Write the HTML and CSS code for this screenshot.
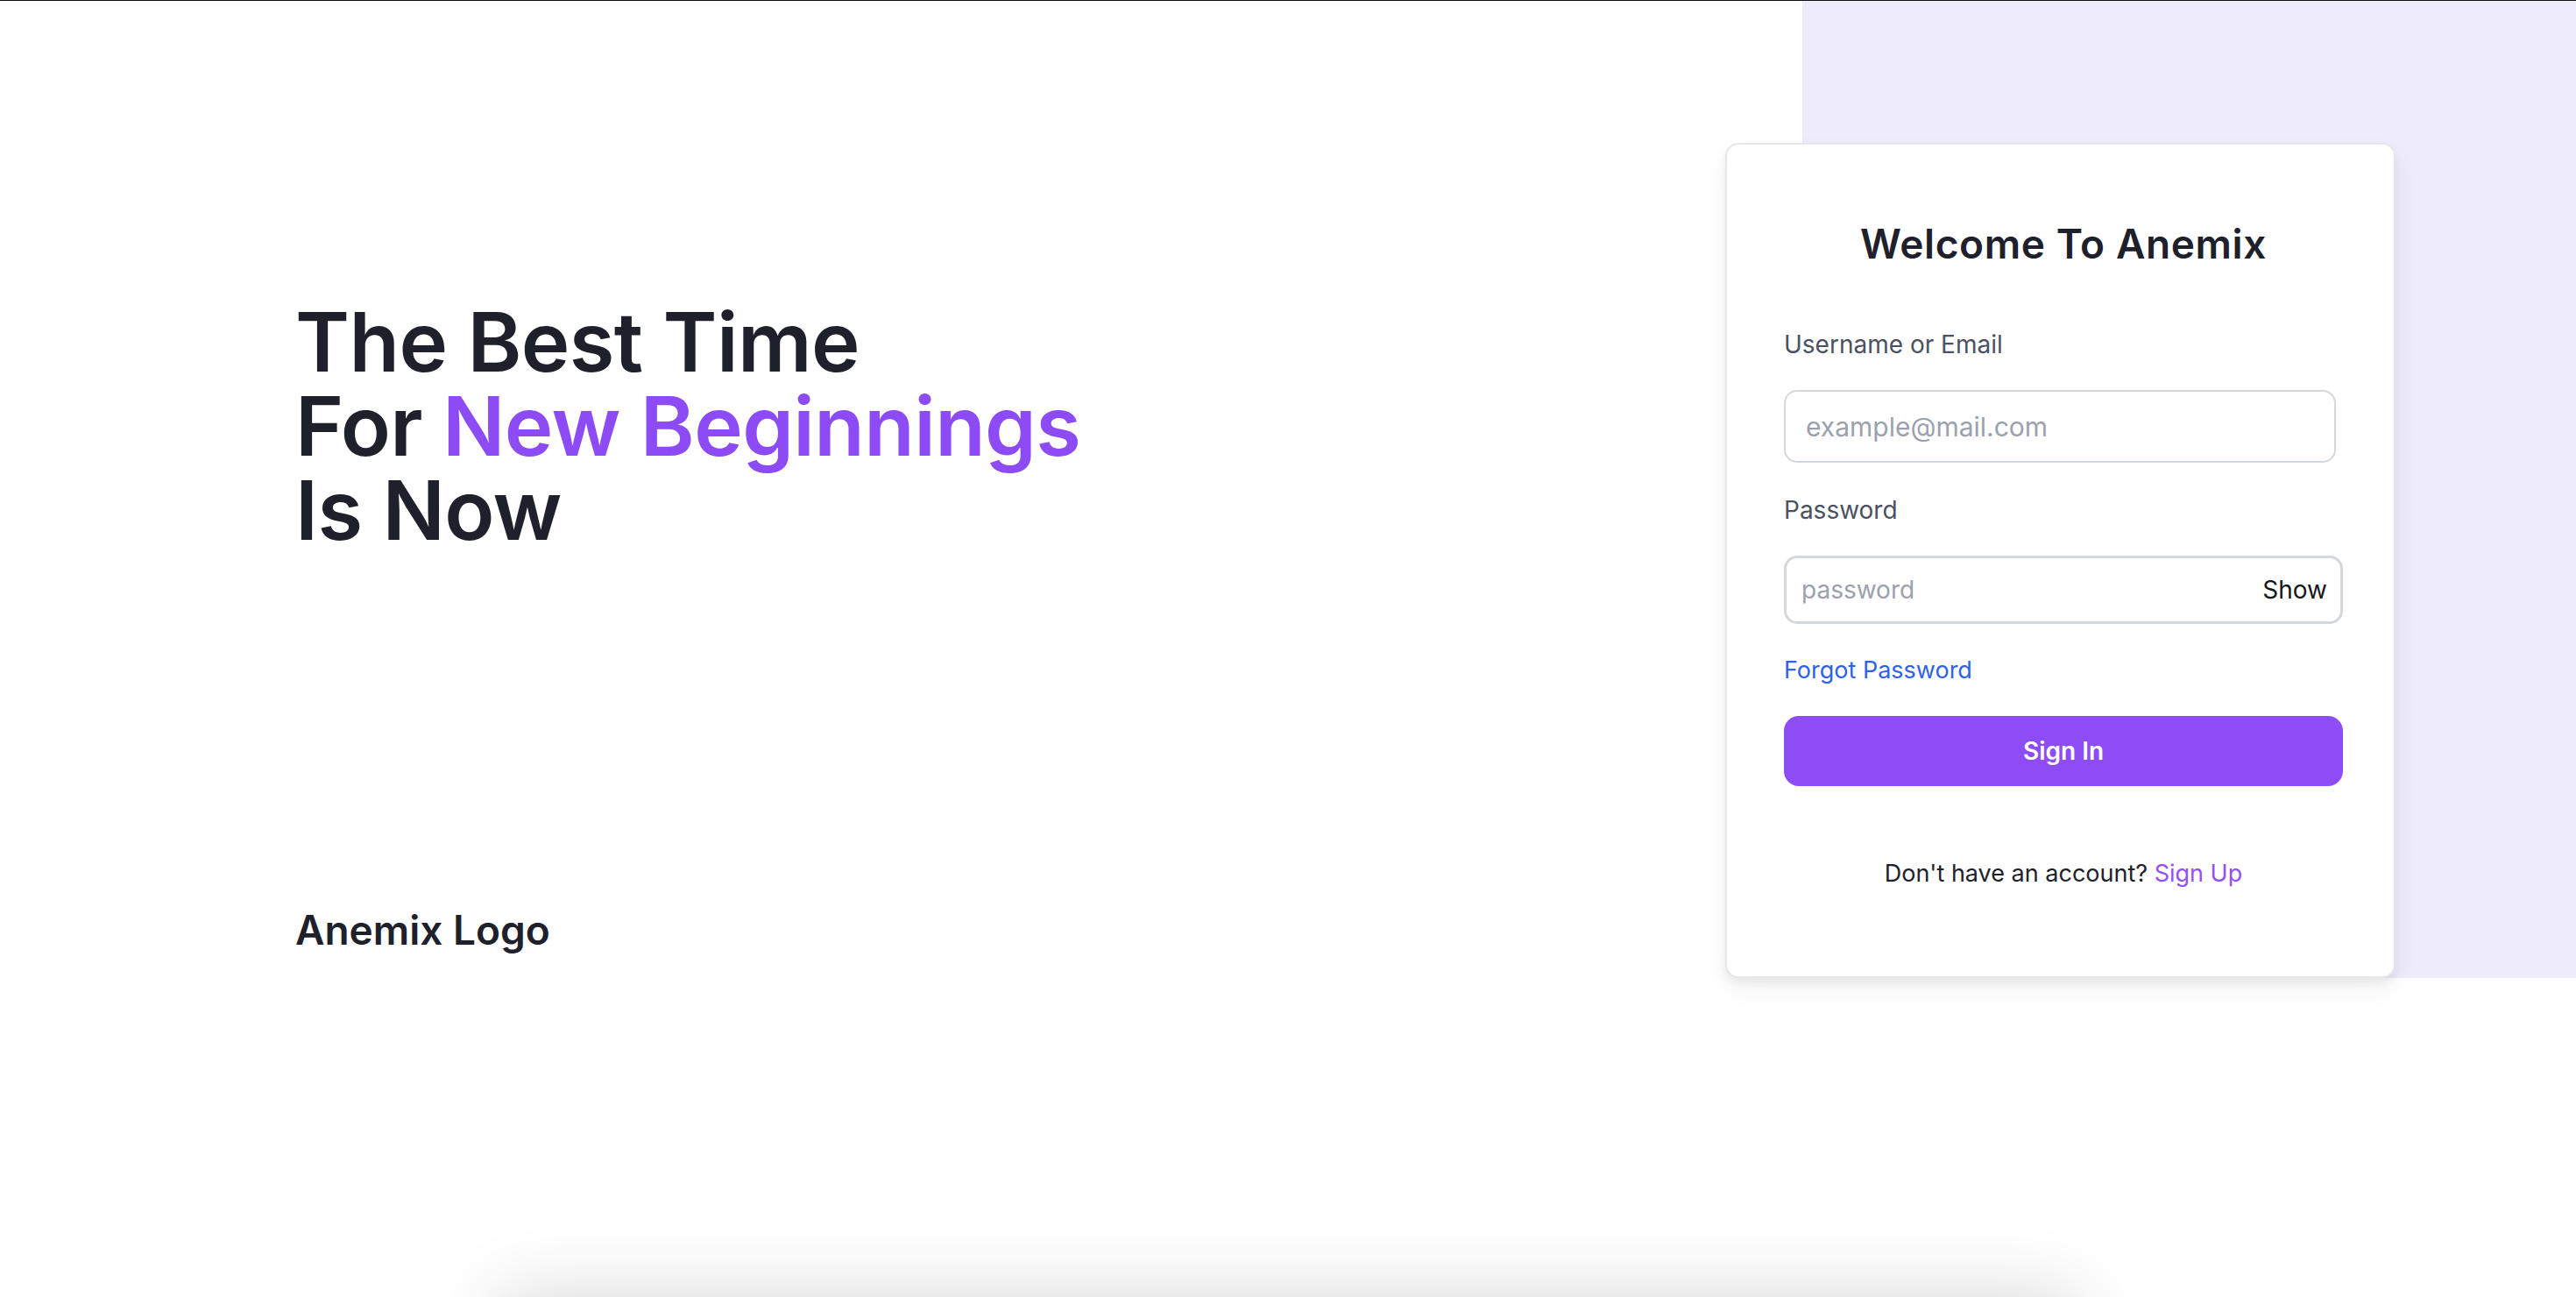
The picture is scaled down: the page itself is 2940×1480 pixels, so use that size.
FILE: index.html
```html
<!DOCTYPE html>
<html lang="en">
<head>
<meta charset="utf-8">
<title>Anemix - Sign In</title>
<link rel="stylesheet" href="styles.css">
</head>
<body>
<main class="hero">
  <section class="intro">
    <h1 class="headline"><span class="line">The Best Time</span><span class="line">For <span class="accent">New Beginnings</span></span><span class="line">Is Now</span></h1>
    <div class="logo">Anemix Logo</div>
  </section>
  <section class="card">
    <h2 class="card-title">Welcome To Anemix</h2>
    <form class="form">
      <label class="label" for="email">Username or Email</label>
      <input class="input input-email" id="email" type="text" placeholder="example@mail.com">
      <label class="label label-pass" for="pass">Password</label>
      <div class="pass-field">
        <input class="input-pass" id="pass" type="password" placeholder="password">
        <button type="button" class="show">Show</button>
      </div>
      <a class="forgot" href="#">Forgot Password</a>
      <button type="button" class="signin">Sign In</button>
      <p class="signup">Don't have an account? <a href="#">Sign Up</a></p>
    </form>
  </section>
</main>
<section class="below"></section>
</body>
</html>
```

FILE: styles.css
```css
* { box-sizing: border-box; }
html, body { margin: 0; padding: 0; }
body {
  font-family: Inter, "Noto Sans", sans-serif;
  color: #1e212b;
  background: #fff;
  border-top: 1px solid #111;
  overflow-x: hidden;
}
.hero {
  display: grid;
  grid-template-columns: 1fr 765px;
  height: 1115px;
  padding: 0 206px 0 337px;
  background: linear-gradient(90deg, #ffffff 0, #ffffff 2057px, #eeebfc 2057px);
}
.intro {
  display: flex;
  flex-direction: column;
  padding-top: 341px;
}
.headline {
  margin: 0;
  display: flex;
  flex-direction: column;
  font-size: 94px;
  font-weight: 600;
  letter-spacing: -0.6px;
  color: #1e212b;
}
.line {
  display: block;
  height: 96px;
  line-height: 96px;
}
.accent { color: #8c4bf5; }
.logo {
  margin-top: 404px;
  font-size: 46px;
  line-height: 1.2;
  font-weight: 600;
  color: #1e212b;
}
.card {
  align-self: end;
  margin-top: 162px;
  height: 953px;
  background: #fff;
  border: 2px solid #e6e7ea;
  border-radius: 15px;
  box-shadow: 0 6px 10px rgba(0,0,0,0.06), 0 14px 30px rgba(0,0,0,0.05);
  padding: 86px 58px 0 65px;
}
.card-title {
  margin: 0;
  text-align: center;
  font-size: 46px;
  line-height: 54px;
  font-weight: 600;
  letter-spacing: 0.6px;
  color: #1e212b;
}
.form { display: flex; flex-direction: column; align-items: flex-start; }
.label {
  margin-top: 67px;
  font-size: 28px;
  line-height: 42px;
  color: #4b5160;
}
.label-pass { margin-top: 33px; }
.input {
  margin-top: 31px;
  width: 630px;
  height: 83px;
  border: 2px solid #d4d7dc;
  border-radius: 15px;
  padding: 0 23px;
  font-family: inherit;
  font-size: 30px;
  color: #1e212b;
  outline: none;
  background: #fff;
}
.input::placeholder { color: #9ba1ad; }
.pass-field {
  margin-top: 31px;
  width: 100%;
  height: 78px;
  display: flex;
  align-items: center;
  border: 3px solid #d4d7dc;
  border-radius: 15px;
  padding: 0 15px 0 17px;
  background: #fff;
}
.input-pass {
  flex: 1;
  border: none;
  outline: none;
  font-family: inherit;
  font-size: 28px;
  color: #1e212b;
  background: transparent;
  padding: 0;
}
.input-pass::placeholder { color: #9ba1ad; }
.show {
  border: none;
  background: none;
  padding: 0;
  font-family: inherit;
  font-size: 28px;
  color: #15171c;
}
.forgot {
  margin-top: 32px;
  font-size: 27px;
  line-height: 42px;
  color: #2f61ea;
  text-decoration: none;
}
.signin {
  margin-top: 31px;
  width: 100%;
  height: 80px;
  border: none;
  border-radius: 17px;
  background: #8e4cf5;
  color: #fff;
  font-family: inherit;
  font-size: 28px;
  font-weight: 600;
}
.signup {
  margin: 79px 0 0;
  width: 100%;
  text-align: center;
  font-size: 27px;
  line-height: 42px;
  color: #1e212b;
}
.signup a { color: #9250f6; text-decoration: none; }
.below {
  width: 1800px;
  height: 400px;
  margin: 364px auto 0;
  background: #fff;
  box-shadow: 0 0 80px rgba(0,0,0,0.16);
}
```
